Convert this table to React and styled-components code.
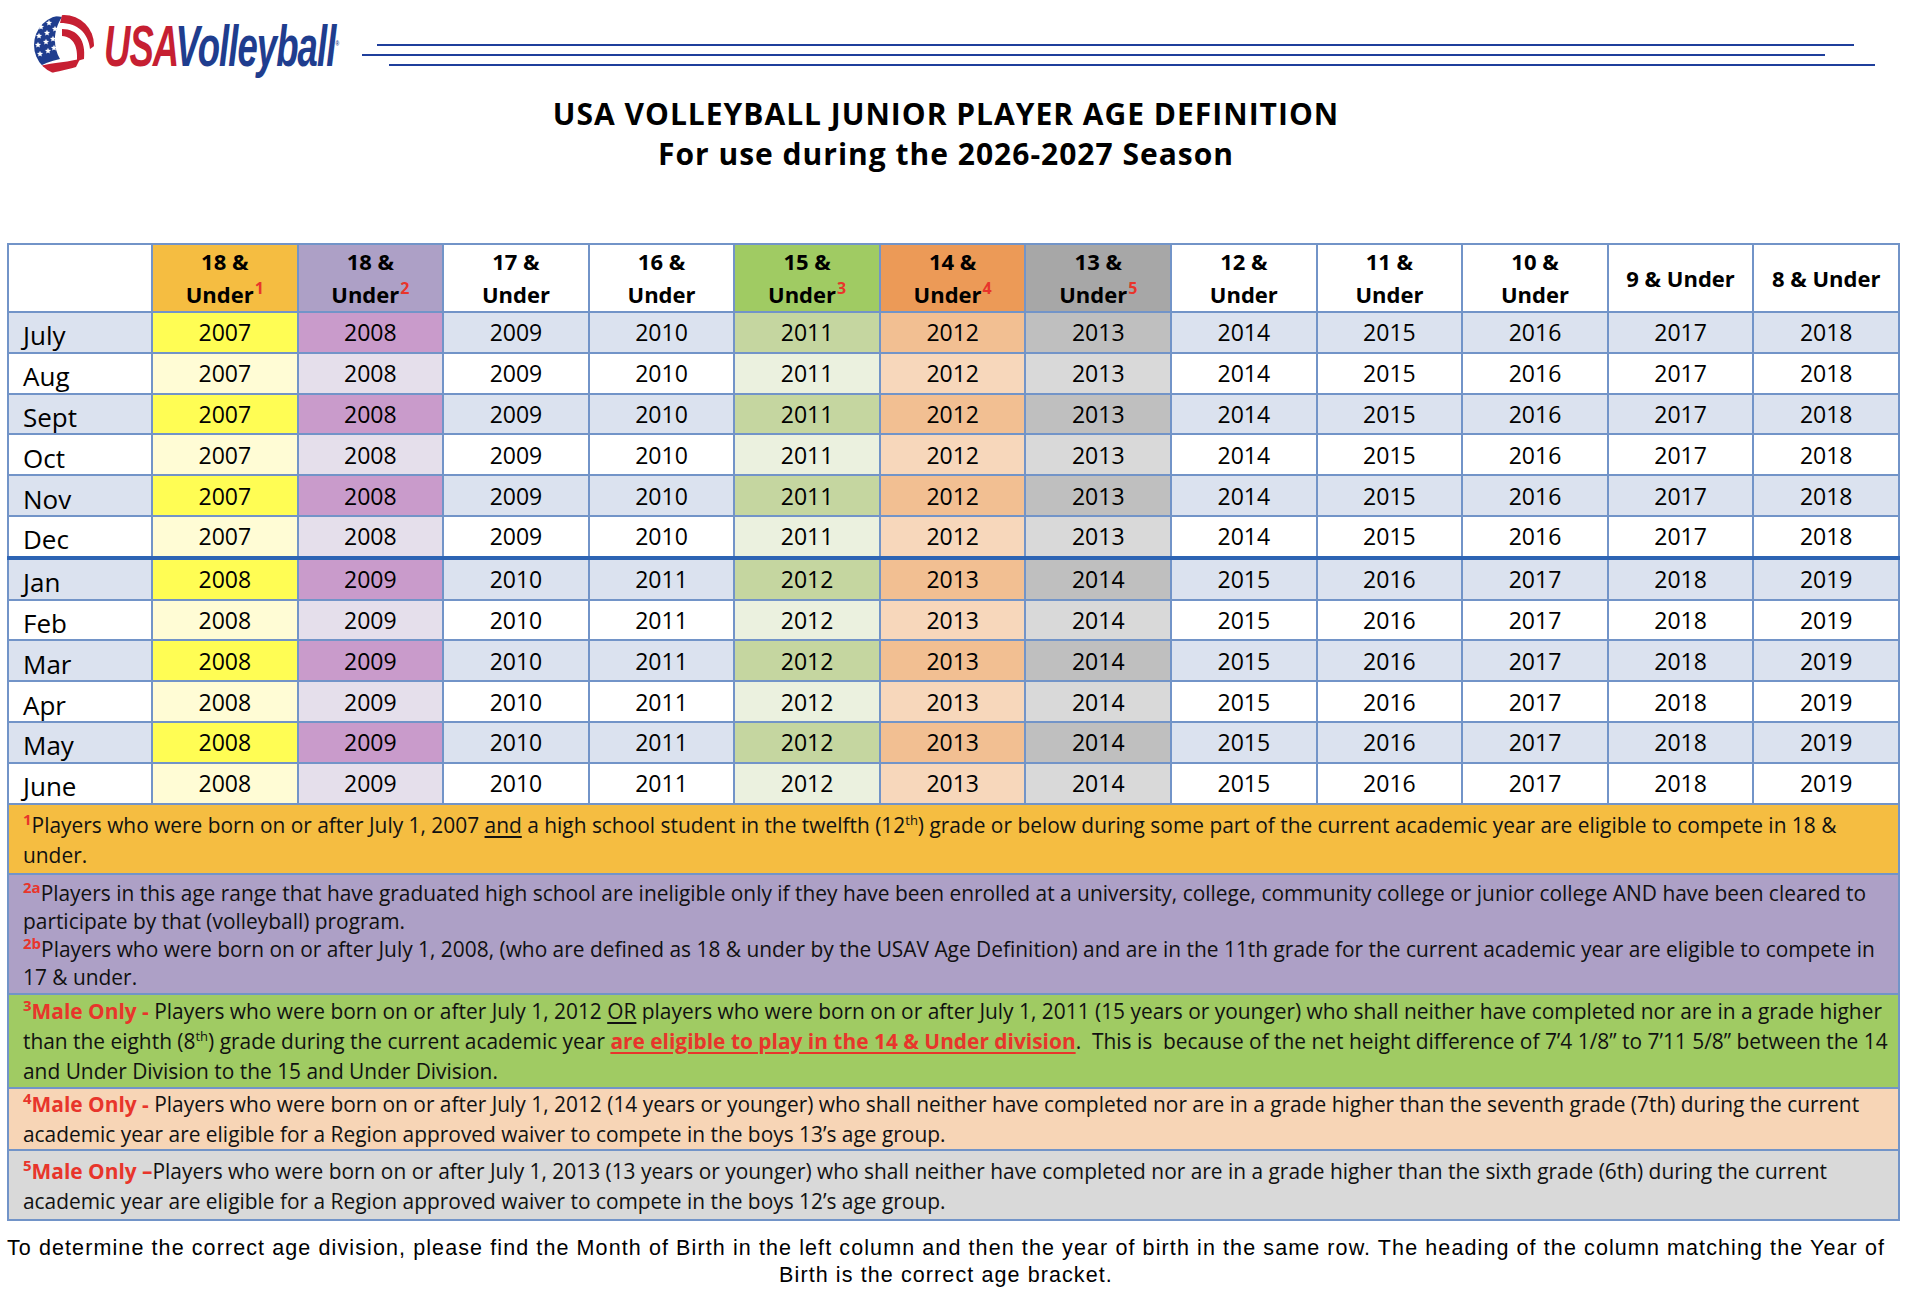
import React from 'react';
import styled, { createGlobalStyle } from 'styled-components';

const GlobalStyle = createGlobalStyle`
  body{
    margin: 0;
    background: #fff;
    font-family: "Open Sans", "Noto Sans", sans-serif;
    color: #111;
  }
`;

const Page = styled.div`
  width: 1908px;
  padding-bottom: 4px;
`;

const TopBar = styled.header`
  display: flex;
  align-items: flex-start;
  height: 88px;
  padding-left: 32px;
`;

const Logo = styled.div`
  display: flex;
  align-items: center;
  width: 330px;
  margin-top: 13px;
  svg{flex: none;}
`;

const LogoWord = styled.span`
  display: inline-block;
  margin-left: 8px;
  font-family: "Liberation Sans", Arial, sans-serif;
  font-weight: 700;
  font-style: italic;
  font-size: 58px;
  line-height: 60px;
  letter-spacing: -1.5px;
  white-space: nowrap;
  transform: scaleX(0.63);
  transform-origin: left center;
  .usa{color: #c61f32;}
  .vb{color: #1f3d8e;}
  sup{font-size: 8px; color: #1f3d8e; font-style: normal; letter-spacing: 0;}
`;

const Rules = styled.div`
  flex: 1;
  display: flex;
  flex-direction: column;
  gap: 8px;
  margin-top: 44px;
`;

const Rule = styled.div`
  height: 2px;
  background: #1f3f9c;
  margin-left: ${({ $l }) => $l}px;
  margin-right: ${({ $r }) => $r}px;
`;

const Title = styled.h1`
  margin: 6px 0 0;
  padding-right: 16px;
  text-align: center;
  font-size: 30px;
  line-height: 40px;
  font-weight: 700;
  color: #000;
  letter-spacing: 1px;
`;

const Table = styled.table`
  margin: 69px 0 0 7px;
  width: 1893px;
  table-layout: fixed;
  border-collapse: collapse;
  border: 2px solid #7294c8;
`;

const HeadCell = styled.th`
  height: 66px;
  padding: 0 4px;
  border: 2px solid #7294c8;
  background: ${({ $bg }) => $bg || '#fff'};
  font-size: 22px;
  line-height: 33px;
  font-weight: 700;
  text-align: center;
  vertical-align: middle;
  color: #000;
  sup{
    color: #e8352b;
    font-size: 16px;
    vertical-align: 9px;
    line-height: 0;
    margin-left: 1px;
  }
`;

const Row = styled.tr`
  border-top: ${({ $split }) => ($split ? '4px solid #2d64b4' : 'none')};
`;

const MonthCell = styled.td`
  height: 32.8px;
  padding: 6px 0 0 14px;
  border: 2px solid #7294c8;
  background: ${({ $band }) => ($band ? '#dbe2ef' : '#fff')};
  font-size: 26px;
  line-height: 30px;
  color: #000;
`;

const YearCell = styled.td`
  height: 38.8px;
  padding: 0;
  border: 2px solid #7294c8;
  background: ${({ $bg }) => $bg};
  text-align: center;
  font-size: 23px;
  line-height: 30px;
  color: #000;
`;

const Notes = styled.div`
  margin-left: 7px;
  width: 1893px;
  box-sizing: border-box;
  border: 2px solid #7294c8;
  border-top: none;
`;

const Note = styled.div`
  background: ${({ $bg }) => $bg};
  padding: ${({ $pad }) => $pad || '5px 4px 3px 14px'};
  font-size: 20.9px;
  line-height: ${({ $lh }) => $lh || 30}px;
  white-space: nowrap;
  overflow: hidden;
  color: #111;
  &:not(:first-child){border-top: 2px solid #7294c8;}
  u{text-underline-offset: 3px;}
`;

const Mark = styled.sup`
  color: #e8352b;
  font-weight: 700;
  font-size: 15px;
  vertical-align: 8px;
  line-height: 0;
`;

const Small = styled.sup`
  font-size: 13px;
  vertical-align: 8px;
  line-height: 0;
`;

const Alert = styled.b`
  color: #e8352b;
  font-weight: 700;
  text-decoration: ${({ $u }) => ($u ? 'underline' : 'none')};
  text-underline-offset: 3px;
`;

const Footer = styled.p`
  margin: 14px 0 0;
  padding-right: 16px;
  text-align: center;
  font-family: "Liberation Sans", Arial, sans-serif;
  font-size: 21.5px;
  letter-spacing: 1.1px;
  line-height: 27px;
  white-space: nowrap;
  color: #000;
`;

const Star = ({ x, y, r = 3.2 }) => {
  const pts = [];
  for (let i = 0; i < 10; i++) {
    const rad = i % 2 ? r * 0.45 : r;
    const a = -Math.PI / 2 + (i * Math.PI) / 5;
    pts.push(`${(x + rad * Math.cos(a)).toFixed(2)},${(y + rad * Math.sin(a)).toFixed(2)}`);
  }
  return <polygon points={pts.join(' ')} fill="#fff" />;
};

const Ball = () => (
  <svg width="64" height="64" viewBox="0 0 64 64">
    <defs>
      <clipPath id="ballClip">
        <circle cx="32" cy="32" r="30" />
      </clipPath>
    </defs>
    <g clipPath="url(#ballClip)">
      <rect width="64" height="64" fill="#fff" />
      <path d="M0 10 C 10 4 22 2 30 4 C 22 16 20 32 28 46 C 18 48 8 52 0 58 Z" fill="#1f3d8e" />
      <path d="M30 2 C 48 0 62 12 64 32 L 58 36 C 56 20 46 10 28 10 Z" fill="#c61f32" />
      <path d="M30 16 C 46 16 54 28 52 46 L 45 48 C 46 34 42 24 30 23 Z" fill="#c61f32" />
      <path d="M4 54 C 16 50 30 50 48 46 L 44 54 C 30 58 16 60 8 64 Z" fill="#c61f32" />
    </g>
    <Star x={9} y={14} />
    <Star x={17} y={10} />
    <Star x={7} y={23} />
    <Star x={15} y={20} />
    <Star x={23} y={16} />
    <Star x={6} y={32} />
    <Star x={14} y={29} />
    <Star x={21} y={26} />
    <Star x={8} y={41} />
    <Star x={16} y={38} />
    <Star x={22} y={35} />
  </svg>
);

const columns = [
  { title: '18 &', mark: '1', head: '#f5bd41', band: '#fffd54', plain: '#fffcd5' },
  { title: '18 &', mark: '2', head: '#ada0c6', band: '#c99bcb', plain: '#e5dfeb' },
  { title: '17 &' },
  { title: '16 &' },
  { title: '15 &', mark: '3', head: '#a0cb63', band: '#c5d6a0', plain: '#ebf1df' },
  { title: '14 &', mark: '4', head: '#ec9a57', band: '#f2bf92', plain: '#f7d7bb' },
  { title: '13 &', mark: '5', head: '#a7a7a7', band: '#bfbfbf', plain: '#d9d9d9' },
  { title: '12 &' },
  { title: '11 &' },
  { title: '10 &' },
  { title: '9 & Under', single: true },
  { title: '8 & Under', single: true },
];

const months = [
  ['July', 2007], ['Aug', 2007], ['Sept', 2007], ['Oct', 2007], ['Nov', 2007], ['Dec', 2007],
  ['Jan', 2008], ['Feb', 2008], ['Mar', 2008], ['Apr', 2008], ['May', 2008], ['June', 2008],
];

function App() {
  return (
    <Page>
      <GlobalStyle />
      <TopBar>
        <Logo>
          <Ball />
          <LogoWord>
            <span className="usa">USA</span><span className="vb">Volleyball</span><sup>®</sup>
          </LogoWord>
        </Logo>
        <Rules>
          <Rule $l={15} $r={54} />
          <Rule $l={0} $r={83} />
          <Rule $l={27} $r={33} />
        </Rules>
      </TopBar>

      <Title>
        USA VOLLEYBALL JUNIOR PLAYER AGE DEFINITION<br />
        For use during the 2026-2027 Season
      </Title>

      <Table>
        <colgroup>
          <col style={{ width: 144 }} />
          {columns.map((c, i) => <col key={i} />)}
        </colgroup>
        <thead>
          <tr>
            <HeadCell />
            {columns.map((c, i) => (
              <HeadCell key={i} $bg={c.head}>
                {c.single ? c.title : <>{c.title}<br />Under{c.mark && <sup>{c.mark}</sup>}</>}
              </HeadCell>
            ))}
          </tr>
        </thead>
        <tbody>
          {months.map(([name, start], r) => {
            const band = r % 2 === 0;
            return (
              <Row key={name} $split={name === 'Jan'}>
                <MonthCell $band={band}>{name}</MonthCell>
                {columns.map((c, i) => (
                  <YearCell key={i} $bg={c.band ? (band ? c.band : c.plain) : (band ? '#dbe2ef' : '#fff')}>
                    {start + i}
                  </YearCell>
                ))}
              </Row>
            );
          })}
        </tbody>
      </Table>

      <Notes>
        <Note $bg="#f5bd41">
          <Mark>1</Mark>Players who were born on or after July 1, 2007 <u>and</u> a high school student in the twelfth (12<Small>th</Small>) grade or below during some part of the current academic year are eligible to compete in 18 &amp;<br />
          under.
        </Note>
        <Note $bg="#ada0c6" $lh={28} $pad="4px 4px 2px 14px">
          <Mark>2a</Mark>Players in this age range that have graduated high school are ineligible only if they have been enrolled at a university, college, community college or junior college AND have been cleared to<br />
          participate by that (volleyball) program.<br />
          <Mark>2b</Mark>Players who were born on or after July 1, 2008, (who are defined as 18 &amp; under by the USAV Age Definition) and are in the 11th grade for the current academic year are eligible to compete in<br />
          17 &amp; under.
        </Note>
        <Note $bg="#a0cb63" $pad="1px 4px 1px 14px">
          <Mark>3</Mark><Alert>Male Only - </Alert>Players who were born on or after July 1, 2012 <u>OR</u> players who were born on or after July 1, 2011 (15 years or younger) who shall neither have completed nor are in a grade higher<br />
          than the eighth (8<Small>th</Small>) grade during the current academic year <Alert $u>are eligible to play in the 14 &amp; Under division</Alert>.&nbsp; This is&nbsp; because of the net height difference of 7’4 1/8” to 7’11 5/8” between the 14<br />
          and Under Division to the 15 and Under Division.
        </Note>
        <Note $bg="#f7d5b6" $pad="0 4px 0 14px">
          <Mark>4</Mark><Alert>Male Only - </Alert>Players who were born on or after July 1, 2012 (14 years or younger) who shall neither have completed nor are in a grade higher than the seventh grade (7th) during the current<br />
          academic year are eligible for a Region approved waiver to compete in the boys 13’s age group.
        </Note>
        <Note $bg="#d9d9d9" $pad="5px 4px 3px 14px">
          <Mark>5</Mark><Alert>Male Only –</Alert>Players who were born on or after July 1, 2013 (13 years or younger) who shall neither have completed nor are in a grade higher than the sixth grade (6th) during the current<br />
          academic year are eligible for a Region approved waiver to compete in the boys 12’s age group.
        </Note>
      </Notes>

      <Footer>
        To determine the correct age division, please find the Month of Birth in the left column and then the year of birth in the same row. The heading of the column matching the Year of<br />
        Birth is the correct age bracket.
      </Footer>
    </Page>
  );
}

export default App;
